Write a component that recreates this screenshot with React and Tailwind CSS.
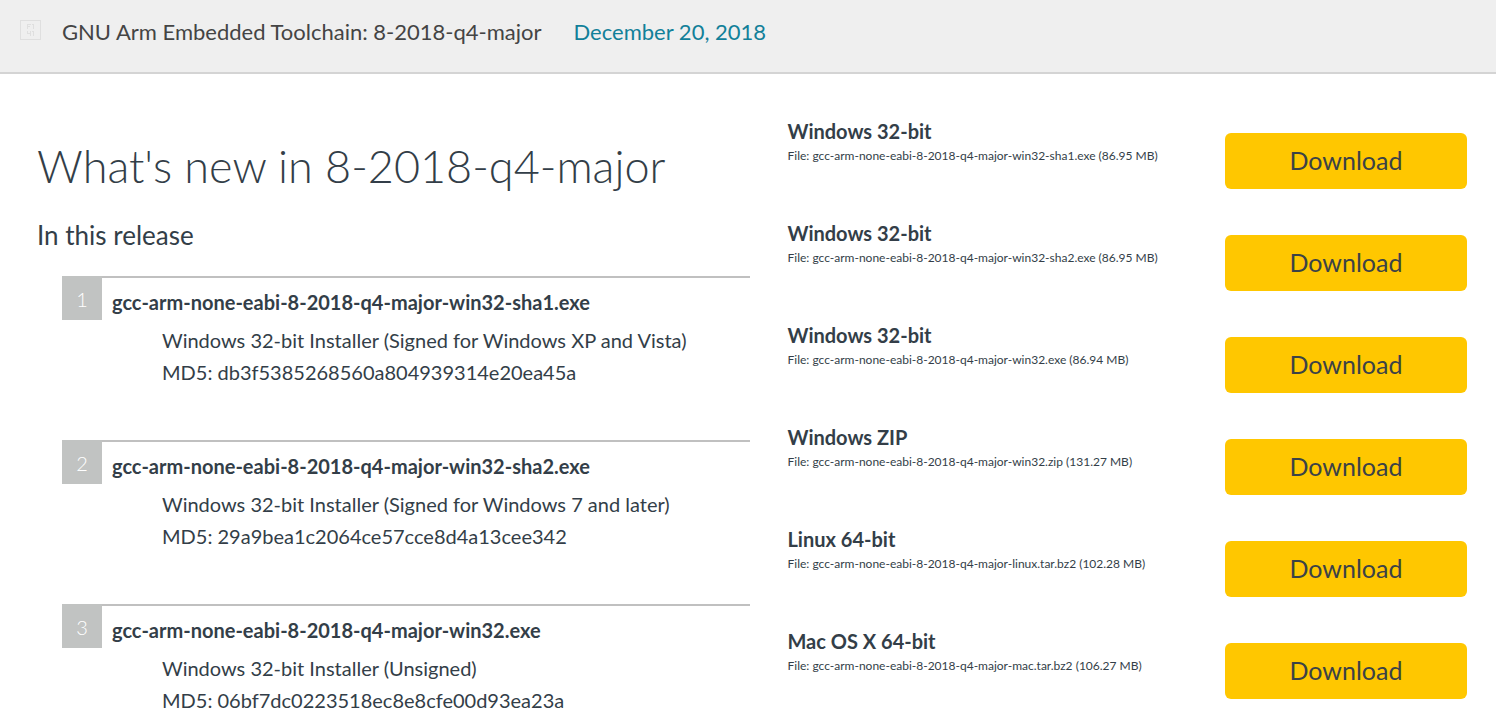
const releases = [
  { file: "gcc-arm-none-eabi-8-2018-q4-major-win32-sha1.exe", note: "Windows 32-bit Installer (Signed for Windows XP and Vista)", md5: "db3f5385268560a804939314e20ea45a" },
  { file: "gcc-arm-none-eabi-8-2018-q4-major-win32-sha2.exe", note: "Windows 32-bit Installer (Signed for Windows 7 and later)", md5: "29a9bea1c2064ce57cce8d4a13cee342" },
  { file: "gcc-arm-none-eabi-8-2018-q4-major-win32.exe", note: "Windows 32-bit Installer (Unsigned)", md5: "06bf7dc0223518ec8e8cfe00d93ea23a" },
];

const downloads = [
  { name: "Windows 32-bit", file: "gcc-arm-none-eabi-8-2018-q4-major-win32-sha1.exe", size: "86.95 MB" },
  { name: "Windows 32-bit", file: "gcc-arm-none-eabi-8-2018-q4-major-win32-sha2.exe", size: "86.95 MB" },
  { name: "Windows 32-bit", file: "gcc-arm-none-eabi-8-2018-q4-major-win32.exe", size: "86.94 MB" },
  { name: "Windows ZIP", file: "gcc-arm-none-eabi-8-2018-q4-major-win32.zip", size: "131.27 MB" },
  { name: "Linux 64-bit", file: "gcc-arm-none-eabi-8-2018-q4-major-linux.tar.bz2", size: "102.28 MB" },
  { name: "Mac OS X 64-bit", file: "gcc-arm-none-eabi-8-2018-q4-major-mac.tar.bz2", size: "106.27 MB" },
];

function ToggleIcon() {
  return (
    <svg className="size-[21px] shrink-0" viewBox="0 0 21 21" fill="none" stroke="#dfdfdf" aria-hidden="true">
      <rect x="0.5" y="0.5" width="20" height="19" />
      <path d="M7.5 4v5M7 4.5h4M7 6.5h3M13.5 4v5M12 4.5h1M7.5 11v3M7 13.5h4M10.5 11v5M13.5 11v5M12 11.5h1" />
    </svg>
  );
}

function Release({ index, release }) {
  return (
    <li className="flex h-[164px] gap-[10px]">
      <span className="flex h-11 w-10 shrink-0 items-center justify-center bg-[#c1c3c2] pt-[2px] text-xl font-light text-white">
        {index}
      </span>
      <div className="min-w-0 grow">
        <div className="-ml-[10px] border-t-2 border-[#c0c0c0]" />
        <h3 className="pt-2 pb-[6px] text-xl leading-8 font-bold">{release.file}</h3>
        <div className="pl-[50px] text-xl leading-8">
          <p>{release.note}</p>
          <p>MD5: {release.md5}</p>
        </div>
      </div>
    </li>
  );
}

function Download({ item }) {
  return (
    <li className="flex items-start justify-between gap-4 pb-[46px]">
      <div className="-mt-[15px]">
        <h3 className="text-xl leading-[26px] font-bold">{item.name}</h3>
        <p className="text-xs leading-6">File: {item.file} ({item.size})</p>
      </div>
      <button type="button" className="h-14 w-[242px] shrink-0 rounded-md bg-[#ffc700] pb-[2px] text-[25px] leading-8 text-[#3b4247]">
        Download
      </button>
    </li>
  );
}

export default function App() {
  return (
    <div className="h-screen overflow-hidden bg-white font-['Lato',sans-serif] text-[#333e48]">
      <header className="flex items-start gap-[21px] border-b-2 border-[#d4d4d4] bg-[#efefef] pt-4 pr-7 pb-6 pl-5">
        <div className="flex h-8 items-start pt-1">
          <ToggleIcon />
        </div>
        <h2 className="flex gap-8 text-[22px] leading-8 text-[#444]">
          <span>GNU Arm Embedded Toolchain: 8-2018-q4-major</span>
          <time dateTime="2018-12-20" className="text-[#128099]">December 20, 2018</time>
        </h2>
      </header>
      <main className="grid grid-cols-[21fr_20fr] gap-x-[37px] pr-[29px] pl-[37px]">
        <section className="min-w-0 pt-16">
          <h1 className="text-[45px] leading-[56px] font-light">What's new in 8-2018-q4-major</h1>
          <h2 className="mt-6 text-[26px] leading-[34px]">In this release</h2>
          <ol className="mt-6 ml-[25px]">
            {releases.map((release, i) => (
              <Release key={release.file} index={i + 1} release={release} />
            ))}
          </ol>
        </section>
        <ul className="min-w-0 pt-[59px]">
          {downloads.map((item) => (
            <Download key={item.file} item={item} />
          ))}
        </ul>
      </main>
    </div>
  );
}
